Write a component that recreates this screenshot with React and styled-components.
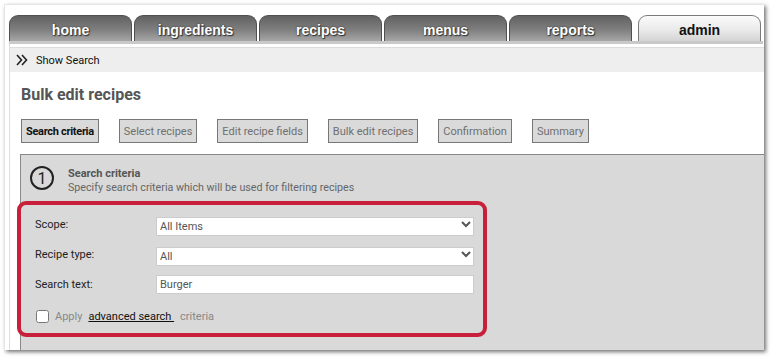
import styled, { createGlobalStyle } from 'styled-components';

const GlobalStyle = createGlobalStyle`
  html, body {
    margin: 0;
    background: #ffffff;
    font-family: Roboto, 'Liberation Sans', Arial, sans-serif;
  }
`;

const Page = styled.div`
  padding: 4px 0 0 4px;
  width: 774px;
  height: 360px;
  box-sizing: border-box;
`;

const Frame = styled.div`
  width: 760px;
  height: 346px;
  background: #ffffff;
  border-top: 1px solid #e6e6e6;
  border-left: 1px solid #e6e6e6;
  box-sizing: border-box;
  box-shadow: 2px 2px 4px rgba(0, 0, 0, 0.55);
  overflow: hidden;
  display: flex;
  flex-direction: column;
`;

const TabBar = styled.div`
  display: flex;
  gap: 2px;
  padding: 10px 0 0 4px;
`;

const Tab = styled.div`
  width: 123px;
  height: 26px;
  box-sizing: border-box;
  margin-left: ${(p) => (p.$active ? '4px' : '0')};
  border: 1px solid ${(p) => (p.$active ? '#7a7a7a' : '#505050')};
  border-bottom: none;
  border-radius: 9px 9px 0 0;
  background: ${(p) =>
    p.$active
      ? 'linear-gradient(to bottom, #fbfbfb 0%, #e8e8e8 60%, #d4d4d4 100%)'
      : 'linear-gradient(to bottom, #616161 0%, #7f7f7f 55%, #a6a6a6 100%)'};
  color: ${(p) => (p.$active ? '#111' : '#fff')};
  text-shadow: ${(p) => (p.$active ? 'none' : '0 0 2px #333, 1px 1px 1px #333')};
  font-family: 'Liberation Sans', Arial, sans-serif;
  font-weight: bold;
  font-size: 14px;
  display: flex;
  align-items: center;
  justify-content: center;
  padding-top: 2px;
`;

const TabRule = styled.div`
  height: 3px;
  margin: 0 1px 0 4px;
  background: #c9c9c9;
`;

const Content = styled.div`
  flex: 1;
  margin-left: 4px;
  border-left: 1px solid #dedede;
  display: flex;
  flex-direction: column;
`;

const SearchToggle = styled.div`
  margin-top: 3px;
  height: 24px;
  border-top: 1px solid #dcdcdc;
  background: #eeeeee;
  display: flex;
  align-items: center;
  gap: 8px;
  padding-left: 6px;
  font-size: 11px;
  color: #111;
`;

const Body = styled.div`
  flex: 1;
  padding-left: 10px;
  display: flex;
  flex-direction: column;
`;

const Title = styled.h1`
  margin: 13px 0 0 1px;
  font-size: 16px;
  line-height: 20px;
  font-weight: bold;
  color: #555;
`;

const Steps = styled.div`
  display: flex;
  gap: 20px;
  margin: 14px 0 0 1px;
`;

const Step = styled.div`
  height: 24px;
  box-sizing: border-box;
  padding: 0 4px;
  border: 1px solid #777;
  background: #dadada;
  display: flex;
  align-items: center;
  font-size: 11px;
  color: ${(p) => (p.$current ? '#111' : '#6f6f6f')};
  font-weight: ${(p) => (p.$current ? 'bold' : 'normal')};
  letter-spacing: ${(p) => (p.$current ? '-0.3px' : '0')};
`;

const Panel = styled.div`
  flex: 1;
  margin-top: 11px;
  border-top: 1px solid #888;
  border-left: 1px solid #888;
  background: #d9d9d9;
  padding: 11px 0 0 0;
`;

const StepHeader = styled.div`
  display: flex;
  align-items: flex-start;
  gap: 14px;
  padding-left: 9px;
`;

const StepNumber = styled.div`
  width: 24px;
  height: 24px;
  box-sizing: border-box;
  border: 2px solid #222;
  border-radius: 50%;
  display: flex;
  align-items: center;
  justify-content: center;
  font-size: 16px;
  color: #222;
`;

const StepText = styled.div`
  display: flex;
  flex-direction: column;
  padding-top: 1px;
`;

const StepTitle = styled.div`
  font-size: 11px;
  line-height: 13px;
  font-weight: bold;
  color: #555;
`;

const StepDesc = styled.div`
  font-size: 10.7px;
  line-height: 15px;
  color: #666;
`;

const Highlight = styled.div`
  width: 470px;
  box-sizing: border-box;
  margin: 6px 0 0 -4px;
  border: 4px solid #c8203a;
  border-radius: 9px;
  padding: 10px 10px 10px 14px;
`;

const FormGrid = styled.div`
  display: grid;
  grid-template-columns: 121px 318px;
  row-gap: 11px;
  align-items: center;
`;

const Label = styled.label`
  font-size: 11px;
  color: #222;
`;

const SelectBox = styled.div`
  position: relative;
  height: 19px;
`;

const Select = styled.select`
  appearance: none;
  width: 100%;
  height: 19px;
  box-sizing: border-box;
  border: 1px solid #ccc;
  background: #fff;
  padding: 0 0 0 3px;
  font-family: Roboto, 'Liberation Sans', Arial, sans-serif;
  font-size: 11px;
  color: #555;
  outline: none;
`;

const Chevron = styled.svg`
  position: absolute;
  right: 3px;
  top: 6px;
  pointer-events: none;
`;

const TextInput = styled.input`
  width: 100%;
  height: 19px;
  box-sizing: border-box;
  border: 1px solid #ccc;
  background: #fff;
  padding: 0 0 0 3px;
  font-family: Roboto, 'Liberation Sans', Arial, sans-serif;
  font-size: 11px;
  color: #555;
  outline: none;
`;

const CheckRow = styled.div`
  display: flex;
  align-items: center;
  margin-top: 16px;
  font-size: 11px;
  color: #888;
  gap: 6px;
`;

const Checkbox = styled.input`
  width: 13px;
  height: 13px;
  margin: 0 0 0 1px;
`;

const AdvancedLink = styled.a`
  color: #111;
  text-decoration: underline;
  white-space: pre;
`;

const tabs = ['home', 'ingredients', 'recipes', 'menus', 'reports', 'admin'];
const steps = [
  'Search criteria',
  'Select recipes',
  'Edit recipe fields',
  'Bulk edit recipes',
  'Confirmation',
  'Summary',
];

const SelectField = ({ value }) => (
  <SelectBox>
    <Select defaultValue={value}>
      <option>{value}</option>
    </Select>
    <Chevron width="10" height="7" viewBox="0 0 10 7">
      <polyline points="1,1 5,5 9,1" fill="none" stroke="#555" strokeWidth="2" />
    </Chevron>
  </SelectBox>
);

export default function App() {
  return (
    <>
      <GlobalStyle />
      <Page>
        <Frame>
          <TabBar>
            {tabs.map((t) => (
              <Tab key={t} $active={t === 'admin'}>
                {t}
              </Tab>
            ))}
          </TabBar>
          <TabRule />
          <Content>
            <SearchToggle>
              <svg width="12" height="12" viewBox="0 0 12 12">
                <polyline points="1,1 5.5,6 1,11" fill="none" stroke="#222" strokeWidth="1.6" />
                <polyline points="6,1 10.5,6 6,11" fill="none" stroke="#222" strokeWidth="1.6" />
              </svg>
              Show Search
            </SearchToggle>
            <Body>
              <Title>Bulk edit recipes</Title>
              <Steps>
                {steps.map((s, i) => (
                  <Step key={s} $current={i === 0}>
                    {s}
                  </Step>
                ))}
              </Steps>
              <Panel>
                <StepHeader>
                  <StepNumber>1</StepNumber>
                  <StepText>
                    <StepTitle>Search criteria</StepTitle>
                    <StepDesc>Specify search criteria which will be used for filtering recipes</StepDesc>
                  </StepText>
                </StepHeader>
                <Highlight>
                  <FormGrid>
                    <Label>Scope:</Label>
                    <SelectField value="All Items" />
                    <Label>Recipe type:</Label>
                    <SelectField value="All" />
                    <Label>Search text:</Label>
                    <TextInput defaultValue="Burger" />
                  </FormGrid>
                  <CheckRow>
                    <Checkbox type="checkbox" />
                    <span>Apply</span>
                    <AdvancedLink>advanced search </AdvancedLink>
                    <span>criteria</span>
                  </CheckRow>
                </Highlight>
              </Panel>
            </Body>
          </Content>
        </Frame>
      </Page>
    </>
  );
}
